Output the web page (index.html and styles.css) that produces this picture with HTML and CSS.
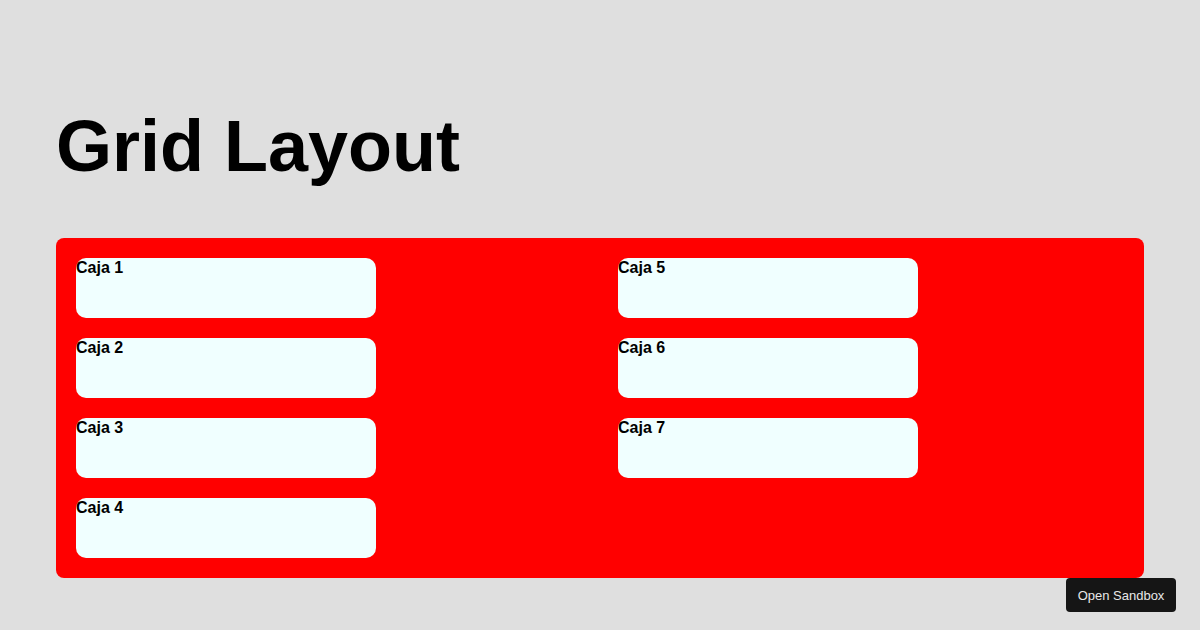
FILE: index.html
```html
<!DOCTYPE html>
<html>
<head>
<meta charset="utf-8">
<link rel="stylesheet" href="styles.css">
</head>
<body>
<main class="page">
  <h1 class="title">Grid Layout</h1>
  <section class="grid">
    <div class="box">Caja 1</div>
    <div class="box">Caja 2</div>
    <div class="box">Caja 3</div>
    <div class="box">Caja 4</div>
    <div class="box">Caja 5</div>
    <div class="box">Caja 6</div>
    <div class="box">Caja 7</div>
  </section>
</main>
<a class="sandbox-btn">Open Sandbox</a>
</body>
</html>
```
FILE: styles.css
```css
html, body {
  margin: 0;
  padding: 0;
}
body {
  background: #dfdfdf;
  font-family: "Liberation Sans", Arial, sans-serif;
  width: 1200px;
  height: 630px;
  overflow: hidden;
}
.page {
  padding: 0 56px;
}
.title {
  margin: 0;
  padding-top: 105px;
  font-size: 72px;
  line-height: 82px;
  font-weight: bold;
  color: #000;
  box-sizing: border-box;
  height: 238px;
}
.grid {
  background: #ff0000;
  border-radius: 8px;
  padding: 20px;
  display: grid;
  grid-template-columns: 1fr 1fr;
  grid-template-rows: repeat(4, 60px);
  grid-auto-flow: column;
  column-gap: 36px;
  row-gap: 20px;
}
.box {
  width: 300px;
  height: 60px;
  background: #f0ffff;
  border-radius: 10px;
  font-size: 16px;
  font-weight: bold;
  line-height: 19px;
  color: #000;
}
.sandbox-btn {
  position: fixed;
  right: 24px;
  bottom: 18px;
  width: 110px;
  height: 34px;
  box-sizing: border-box;
  background: #151515;
  color: #e8e8e8;
  border-radius: 4px;
  font-size: 13px;
  display: flex;
  align-items: center;
  justify-content: center;
}
```
